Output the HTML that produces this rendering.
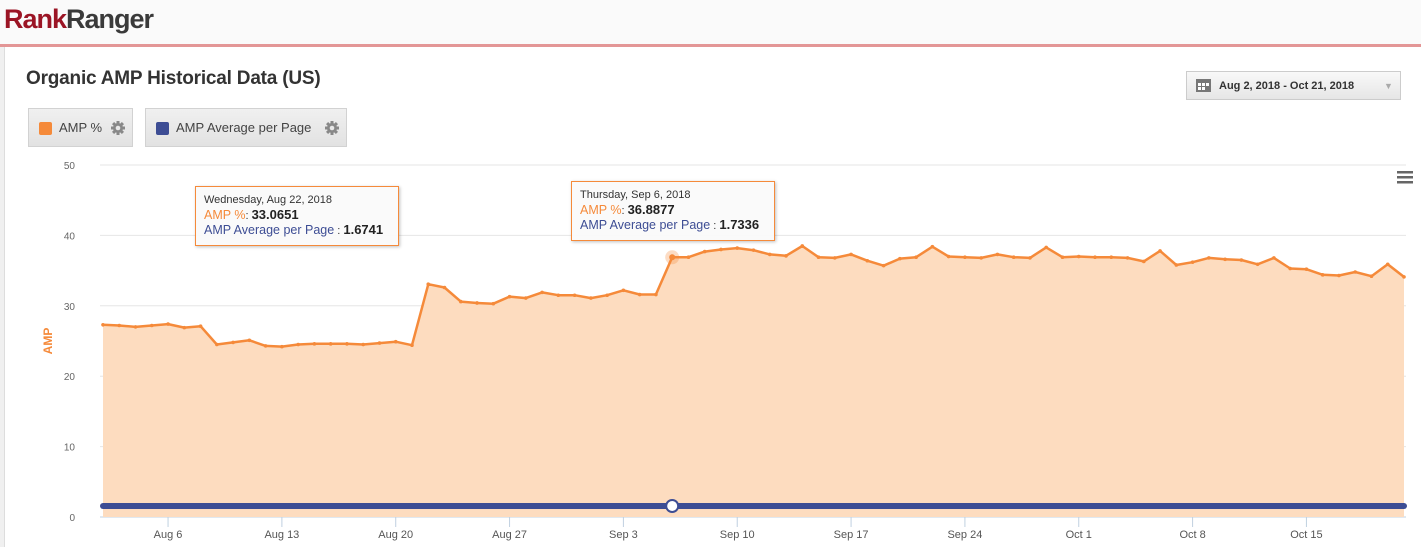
<!DOCTYPE html>
<html><head><meta charset="utf-8"><style>
body{margin:0;width:1421px;height:547px;overflow:hidden;background:#fff;font-family:"Liberation Sans",sans-serif;position:relative}
.hdr{position:absolute;left:0;top:0;width:1421px;height:44px;background:#fafafa;border-bottom:3px solid #e39696}
.logo{position:absolute;left:4px;top:4px;font-size:27px;font-weight:bold;letter-spacing:-1px;color:#3a3a3a}
.logo span{color:#9b1525}
.side{position:absolute;left:0;top:47px;width:4px;height:500px;background:#f0f0f0;border-right:1px solid #ddd}
.title{position:absolute;left:26px;top:68px;font-size:19px;color:#333;font-weight:bold;letter-spacing:-0.2px}
.btn{position:absolute;top:108px;height:39px;background:linear-gradient(#f0f0f0,#e2e2e2);border:1px solid #d2d2d2;box-sizing:border-box;font-size:13px;color:#444;line-height:38px}
.sq{position:absolute;left:10px;top:13px;width:13px;height:13px;border-radius:2px}
.gear{position:absolute;top:12px}
.date{position:absolute;left:1186px;top:71px;width:215px;height:29px;background:linear-gradient(#f8f8f8,#e6e6e6);border:1px solid #ccc;box-sizing:border-box;font-size:11px;font-weight:bold;color:#333;line-height:28px}
.tt{position:absolute;background:rgba(250,250,250,.95);border:1px solid #f58a3a;box-shadow:1px 1px 3px rgba(0,0,0,.25);font-size:11px;color:#333;padding:6px 8px;line-height:14.5px}
.tt .a{color:#f58a3a;font-size:12.5px}.tt .b{color:#3d4d94;font-size:12.5px}.tt b{font-size:13px;color:#222}
</style></head><body>
<div class="hdr"><div class="logo"><span>Rank</span>Ranger</div></div>
<div class="side"></div>
<div class="title">Organic AMP Historical Data (US)</div>
<div class="btn" style="left:28px;width:105px"><div class="sq" style="background:#f58a3a"></div><span style="position:absolute;left:30px">AMP %</span><svg class="gear" style="left:82px" width="14" height="14" viewBox="0 0 14 14"><g fill="#888"><circle cx="7" cy="7" r="5"/><rect x="5.5" y="0" width="3" height="14"/><rect x="0" y="5.5" width="14" height="3"/><rect x="5.5" y="0" width="3" height="14" transform="rotate(45 7 7)"/><rect x="5.5" y="0" width="3" height="14" transform="rotate(-45 7 7)"/></g><circle cx="7" cy="7" r="2.3" fill="#e8e8e8"/></svg></div>
<div class="btn" style="left:145px;width:202px"><div class="sq" style="background:#3d4d94"></div><span style="position:absolute;left:30px">AMP Average per Page</span><svg class="gear" style="left:179px" width="14" height="14" viewBox="0 0 14 14"><g fill="#888"><circle cx="7" cy="7" r="5"/><rect x="5.5" y="0" width="3" height="14"/><rect x="0" y="5.5" width="14" height="3"/><rect x="5.5" y="0" width="3" height="14" transform="rotate(45 7 7)"/><rect x="5.5" y="0" width="3" height="14" transform="rotate(-45 7 7)"/></g><circle cx="7" cy="7" r="2.3" fill="#e8e8e8"/></svg></div>
<div class="date"><svg style="position:absolute;left:9px;top:7px" width="15" height="13"><rect x="0" y="0" width="15" height="13" fill="#777"/><rect x="2" y="4" width="3" height="3" fill="#fff"/><rect x="6" y="4" width="3" height="3" fill="#fff"/><rect x="10" y="4" width="3" height="3" fill="#fff"/><rect x="2" y="8" width="3" height="3" fill="#fff"/><rect x="6" y="8" width="3" height="3" fill="#fff"/></svg><span style="position:absolute;left:32px">Aug 2, 2018 - Oct 21, 2018</span><span style="position:absolute;left:197px;color:#aaa;font-size:9px">▼</span></div>
<svg id="ch" style="position:absolute;left:0;top:0" width="1421" height="547"></svg>
<div class="tt" style="left:195px;top:186px;width:186px">Wednesday, Aug 22, 2018<br><span class="a">AMP %</span>: <b>33.0651</b><br><span class="b">AMP Average per Page</span> : <b>1.6741</b></div>
<div class="tt" style="left:571px;top:181px;width:186px">Thursday, Sep 6, 2018<br><span class="a">AMP %</span>: <b>36.8877</b><br><span class="b">AMP Average per Page</span> : <b>1.7336</b></div>
<script>
var v=[27.3,27.2,27.0,27.2,27.4,26.9,27.1,24.5,24.8,25.1,24.3,24.2,24.5,24.6,24.6,24.6,24.5,24.7,24.9,24.4,33.07,32.6,30.6,30.4,30.3,31.3,31.1,31.9,31.5,31.5,31.1,31.5,32.2,31.6,31.6,36.89,36.9,37.7,38.0,38.2,37.9,37.3,37.1,38.5,36.9,36.8,37.3,36.4,35.7,36.7,36.9,38.4,37.0,36.9,36.8,37.3,36.9,36.8,38.3,36.9,37.0,36.9,36.9,36.8,36.3,37.8,35.8,36.2,36.8,36.6,36.5,35.9,36.8,35.3,35.2,34.4,34.3,34.8,34.2,35.9,34.1];
var X=i=>103+i*16.2625,Y=t=>517-t*7.04,s='';
for(var k=0;k<=5;k++){var y=517-k*70.4;s+='<line x1="100" x2="1406" y1="'+y+'" y2="'+y+'" stroke="'+(k?'#e6e6e6':'#c0d0e0')+'"/><text x="75" y="'+(y+4)+'" text-anchor="end" font-size="10" fill="#666" font-family="Liberation Sans">'+k*10+'</text>';}
var p=v.map((t,i)=>X(i).toFixed(1)+','+Y(t).toFixed(1)).join(' ');
s+='<polygon points="'+X(0)+',517 '+p+' '+X(80)+',517" fill="#fddcbf"/>';
s+='<polyline points="'+p+'" fill="none" stroke="#f58a3a" stroke-width="2.5" stroke-linejoin="round"/>';
v.forEach((t,i)=>s+='<circle cx="'+X(i)+'" cy="'+Y(t)+'" r="1.8" fill="#f58a3a"/>');
s+='<line x1="'+X(0)+'" x2="'+X(80)+'" y1="506" y2="506" stroke="#3d4d94" stroke-width="6" stroke-linecap="round"/>';
s+='<circle cx="'+X(35)+'" cy="'+Y(36.89)+'" r="7" fill="#f58a3a" opacity=".3"/><circle cx="'+X(35)+'" cy="'+Y(36.89)+'" r="3" fill="#f58a3a"/>';
s+='<circle cx="'+X(35)+'" cy="506" r="6" fill="#fff" stroke="#3d4d94" stroke-width="2"/>';
var L=['Aug 6','Aug 13','Aug 20','Aug 27','Sep 3','Sep 10','Sep 17','Sep 24','Oct 1','Oct 8','Oct 15'];
L.forEach((l,j)=>{var x=X(4+7*j);s+='<line x1="'+x+'" x2="'+x+'" y1="517" y2="527" stroke="#c0d0e0"/><text x="'+x+'" y="538" text-anchor="middle" font-size="11" fill="#555" font-family="Liberation Sans">'+l+'</text>';});
s+='<text transform="translate(52,341) rotate(-90)" text-anchor="middle" font-size="12" font-weight="bold" fill="#f58a3a" font-family="Liberation Sans">AMP</text>';
s+='<rect x="1397" y="171" width="16" height="2.5" fill="#666"/><rect x="1397" y="176" width="16" height="2.5" fill="#666"/><rect x="1397" y="181" width="16" height="2.5" fill="#666"/>';
document.getElementById('ch').innerHTML=s;
</script>
</body></html>
